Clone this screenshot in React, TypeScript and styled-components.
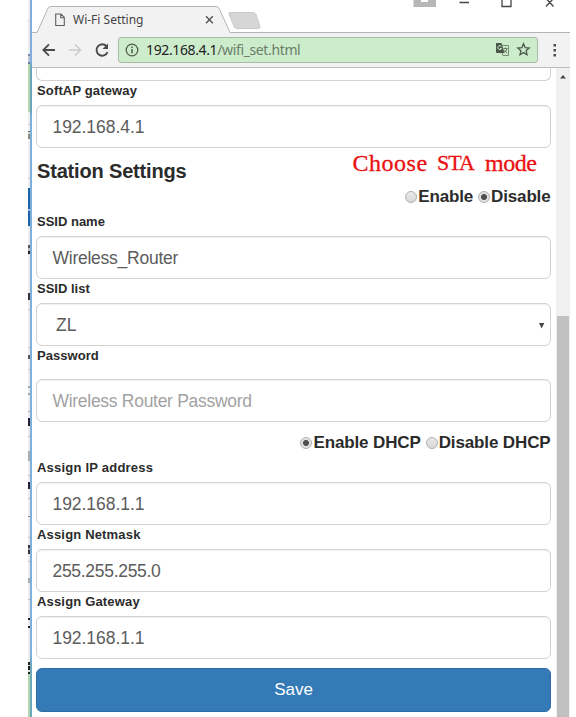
import React from 'react';
import styled, { createGlobalStyle } from 'styled-components';

const GlobalStyle = createGlobalStyle`
  * { box-sizing: border-box; }
  body { margin: 0; background: #fff; overflow: hidden; }
`;

const Screen = styled.main`
  display: flex;
  width: 576px;
  height: 717px;
  padding-left: 28px;
  overflow: hidden;
  background: #fff;
  font-family: 'Liberation Sans', Arial, sans-serif;
`;

const Sliver = styled.div`
  display: flex;
  flex-direction: column;
  width: 2px;
`;

const Segment = styled.div<{ $h: number; $c: string }>`
  flex: 0 0 ${p => p.$h}px;
  background: ${p => p.$c};
`;

const Edge = styled.div`
  width: 2px;
  background: linear-gradient(#82aede 0 60px, #6ba6bd 68px 112px, #7fb0dc 116px 655px, #6ba9bd 665px);
`;

const Browser = styled.div`
  display: flex;
  flex-direction: column;
  width: 538px;
  height: 717px;
`;

const TitleBar = styled.header`
  display: flex;
  position: relative;
  height: 33px;
  flex: none;
`;

const TitleArt = styled.svg`
  position: absolute;
  inset: 0;
`;

const TabTitle = styled.span`
  position: relative;
  margin: 11px 0 0 41px;
  font: 12px/18px 'Noto Sans', 'Open Sans', sans-serif;
  letter-spacing: 0;
  color: #444;
`;

const Toolbar = styled.nav`
  display: flex;
  align-items: center;
  flex: none;
  height: 35px;
  padding-left: 9px;
  background: #f2f2f2;
  border-bottom: 1px solid #b9b9b9;
`;

const AddressBar = styled.div`
  display: flex;
  align-items: center;
  width: 420px;
  height: 26px;
  margin: 0 8px 0 8px;
  padding: 0 6px 1px 6px;
  border: 1px solid #a9bba7;
  border-radius: 3px;
  background: #cdeccb;
`;

const Url = styled.span`
  flex: 1;
  margin-left: 7px;
  font: 14px/22px 'Noto Sans', 'Open Sans', sans-serif;
  letter-spacing: -0.37px;
  color: #6b7d69;
`;

const Host = styled.span`
  color: #222;
`;

const Viewport = styled.div`
  display: flex;
  flex: 1;
  min-height: 0;
`;

const Form = styled.form`
  display: flex;
  flex-direction: column;
  width: 520px;
  margin-right: 4px;
  padding-left: 4px;
`;

const Box = styled.div<{ $muted?: boolean; $indent?: number; $track?: number }>`
  display: flex;
  align-items: center;
  justify-content: space-between;
  flex: none;
  width: 515px;
  height: 43px;
  padding: 1px 5px 0 ${p => p.$indent ?? 15.5}px;
  border: 1px solid #d2d2d2;
  border-radius: 6px;
  box-shadow: inset 0 1px 1px rgba(0, 0, 0, 0.06);
  font-size: 17.5px;
  letter-spacing: ${p => p.$track ?? -0.05}px;
  color: ${p => (p.$muted ? '#a2a2a2' : '#5c5c5c')};
`;

const CutBox = styled.div`
  flex: none;
  width: 515px;
  height: 13px;
  border: 1px solid #d2d2d2;
  border-top: 0;
  border-radius: 0 0 6px 6px;
`;

const Label = styled.label<{ $h?: number; $track?: number }>`
  flex: none;
  height: ${p => p.$h ?? 24}px;
  padding-left: 1px;
  font-size: 13px;
  font-weight: bold;
  line-height: 20px;
  letter-spacing: ${p => p.$track ?? 0}px;
  color: #2b2b2b;
`;

const SectionHead = styled.div`
  display: flex;
  justify-content: space-between;
  flex: none;
  height: 31px;
  padding-right: 15px;
`;

const Heading = styled.h2`
  margin: 10px 0 0 1px;
  font-size: 20px;
  line-height: 26px;
  letter-spacing: -0.17px;
  color: #2b2b2b;
`;

const Note = styled.div`
  display: flex;
  gap: 10px;
  margin-top: 1px;
  font: 24px/28px 'Liberation Serif', serif;
  color: #ea1010;
  -webkit-text-stroke: 0.3px #ea1010;
`;

const NoteWord = styled.span<{ $track: number; $size?: number }>`
  font-size: ${p => p.$size ?? 24}px;
  letter-spacing: ${p => p.$track}px;
  margin-right: ${p => -p.$track}px;
`;

const Radios = styled.div<{ $h: number; $top: number }>`
  display: flex;
  justify-content: flex-end;
  flex: none;
  height: ${p => p.$h}px;
  padding: ${p => p.$top}px 1.5px 0 0;
  gap: 5px;
`;

const RadioLabel = styled.label<{ $track?: number }>`
  display: flex;
  align-items: center;
  height: 20px;
  font-size: 17px;
  font-weight: bold;
  letter-spacing: ${p => p.$track ?? -0.07}px;
  color: #2b2b2b;
`;

const Dot = styled.span<{ $on?: boolean }>`
  width: 12px;
  height: 12px;
  margin: 0 1px 1px 0;
  border: 1px solid #b0b0b0;
  border-radius: 50%;
  background: ${p => (p.$on
    ? 'radial-gradient(circle, #505050 0 2.6px, #e2e2e2 3.4px)'
    : 'linear-gradient(#e9e9e9, #d8d8d8)')};
`;

const Save = styled.button`
  flex: none;
  width: 515px;
  height: 44px;
  margin-top: 9px;
  border: 1px solid #2e6da4;
  border-radius: 6px;
  background: #337ab7;
  color: #fff;
  font: 17px 'Liberation Sans', Arial, sans-serif;
`;

const ScrollTrack = styled.div`
  display: flex;
  flex-direction: column;
  align-items: center;
  justify-content: space-between;
  width: 14px;
  padding-top: 6px;
  background: #f0f0f0;
`;

const Thumb = styled.div`
  width: 12px;
  height: 401px;
  background: #c0c0c0;
`;

const sliver: [number, string][] = [
  [20, '#f0f0f0'], [1, '#cfd3da'], [33, '#e9ebef'], [2, '#7888a8'], [6, '#bcc5d8'], [2, '#637ca8'],
  [48, '#b4d6ac'], [12, '#eceef0'], [1, '#c8ccd2'], [6, '#eceef0'], [1, '#4f6678'], [2, '#dcdcd4'],
  [5, '#8c8c78'], [39, '#eceef0'], [1, '#c8ccd2'], [9, '#eceef0'], [21, '#1c62a6'], [2, '#9dc0dd'],
  [15, '#1c62a6'], [19, '#ececec'], [3, '#555'], [3, '#bbb'], [3, '#222'], [39, '#ececec'],
  [7, '#334'], [9, '#ececec'], [1, '#c8ccd2'], [37, '#ececec'], [1, '#c8ccd2'], [7, '#ececec'],
  [4, '#556'], [10, '#ececec'], [1, '#c8ccd2'], [16, '#ececec'], [2, '#9aa'], [5, '#ececec'], [2, '#9aa'],
  [16, '#ececec'], [1, '#aaa'], [6, '#ececec'], [8, '#223'], [10, '#ececec'], [1, '#bbb'],
  [14, '#ececec'], [10, '#a5aab4'], [14, '#ececec'], [1, '#bbb'], [6, '#ececec'], [7, '#223'],
  [9, '#ececec'], [1, '#bbb'], [17, '#ececec'], [1, '#889'], [20, '#ececec'], [1, '#bbb'],
  [7, '#ececec'], [3, '#334'], [2, '#999'], [4, '#334'], [7, '#ececec'], [1, '#bbb'], [16, '#ececec'],
  [5, '#a5aab4'], [16, '#ececec'], [1, '#bbb'], [18, '#ececec'], [2, '#223'], [6, '#ececec'],
  [2, '#223'], [34, '#ececec'], [3, '#222'], [1, '#ddd'], [4, '#222'], [2, '#ddd'], [2, '#222'], [80, '#b4d6ac'],
];

const BackIcon = () => (
  <svg width="16" height="16" viewBox="0 0 16 16" fill="none" stroke="#4b4b4b" strokeWidth="1.8">
    <path d="M14 8H2.5M8 2.3 2.3 8 8 13.7" />
  </svg>
);

const ForwardIcon = styled.svg`
  margin-left: 10px;
`;

const ReloadIcon = styled.svg`
  margin-left: 11px;
`;

const StarIcon = styled.svg`
  margin-left: 6px;
`;

export default function App() {
  return (
    <>
      <GlobalStyle />
      <Screen>
        <Sliver>
          {sliver.map(([h, c], i) => <Segment key={i} $h={h} $c={c} />)}
        </Sliver>
        <Edge />
        <Browser>
          <TitleBar>
            <TitleArt width="538" height="33" viewBox="0 0 538 33" fill="none">
              <path d="M0 32.5H5L16 8.2Q17 6.5 19 6.5H184Q186 6.5 187 8.2L198 32.5H538V33H0z" fill="#f2f2f2" />
              <path d="M0 32.5H5L16 8.2Q17 6.5 19 6.5H184Q186 6.5 187 8.2L198 32.5H538" stroke="#b4b4b4" />
              <path d="M197 14Q196.500 12.500 198 12.500H221Q223 12.500 224 14.500L228 26.500Q228.500 28.500 226 28.500H205Q203 28.500 202 26.500Z" fill="#d6d6d6" stroke="#cacaca" />
              <path d="M23.700 14H29L32.300 17.300V25.500H23.700ZM28.700 14V17.700H32" stroke="#606060" strokeWidth="1.100" />
              <path d="M174 16.300L180.800 23.300M180.800 16.300L174 23.300" stroke="#555" strokeWidth="1.400" />
              <path d="M381.500 0H404V7H381.500Z" fill="#b7b7b7" />
              <path d="M389 1H396" stroke="#fff" strokeWidth="2" />
              <path d="M427.500 2.500H437M470 0V6.500H479V0M514 6.500L521.500-1.500M521.500 6.500L514-1.500" stroke="#444" strokeWidth="1.300" />
            </TitleArt>
            <TabTitle>Wi-Fi Setting</TabTitle>
          </TitleBar>
          <Toolbar>
            <BackIcon />
            <ForwardIcon width="16" height="16" viewBox="0 0 16 16" fill="none" stroke="#ccc" strokeWidth="1.7">
              <path d="M2 8H13.500M8 2.500L13.500 8L8 13.500" />
            </ForwardIcon>
            <ReloadIcon width="16" height="16" viewBox="0 0 16 16" fill="none" stroke="#4b4b4b" strokeWidth="1.9">
              <path d="M13.500 10.200A5.700 5.700 0 1 1 12.500 4.200" />
              <path d="M14 1.500V7H8.500Z" fill="#4b4b4b" stroke="none" />
            </ReloadIcon>
            <AddressBar>
              <svg width="14" height="14" viewBox="0 0 14 14" fill="none" stroke="#50604e" strokeWidth="1.300">
                <circle cx="7" cy="7" r="5.800" />
                <path d="M7 6V10.300M7 3.500V5" strokeWidth="1.600" />
              </svg>
              <Url><Host>192.168.4.1</Host>/wifi_set.html</Url>
              <svg width="15" height="15" viewBox="0 0 15 15" fill="none">
                <path d="M6.500 3.500H13.500V13.500H8L6.500 10" stroke="#788b76" />
                <path d="M1 1H6.500L9.500 11H2Q1 11 1 10Z" fill="#4b574a" />
                <path d="M6.500 4.500A2 2 0 1 0 6.700 6.500H5" stroke="#cdeccb" />
                <path d="M8.500 6.500H12.500M10.500 5.500V6.500M12 6.500Q11 9.500 9 10.500M9.500 8L12 11" stroke="#65765f" />
              </svg>
              <StarIcon width="15" height="15" viewBox="0 0 15 15" fill="none" stroke="#4d594b" strokeWidth="1.300">
                <path d="M7.500 1.800L9.100 5.600L13.200 6L10.100 8.700L11 12.700L7.500 10.600L4 12.700L4.900 8.700L1.800 6L5.900 5.600Z" />
              </StarIcon>
            </AddressBar>
            <svg width="18" height="16" viewBox="0 0 18 16" fill="#4b4b4b">
              <path d="M7.500 2h2.500v2.500h-2.500zM7.500 7h2.500v2.500h-2.500zM7.500 12h2.500v2.500h-2.500z" />
            </svg>
          </Toolbar>
          <Viewport>
            <Form>
              <CutBox />
              <Label $track={0.15}>SoftAP gateway</Label>
              <Box>192.168.4.1</Box>
              <SectionHead>
                <Heading>Station Settings</Heading>
                <Note>
                  <NoteWord $track={0.5}>Choose</NoteWord>
                  <NoteWord $track={-1} $size={22}>STA</NoteWord>
                  <NoteWord $track={-0.4}>mode</NoteWord>
                </Note>
              </SectionHead>
              <Radios $h={33} $top={8}>
                <RadioLabel $track={-0.15}><Dot />Enable</RadioLabel>
                <RadioLabel $track={-0.15}><Dot $on />Disable</RadioLabel>
              </Radios>
              <Label>SSID name</Label>
              <Box $track={-0.25}>Wireless_Router</Box>
              <Label>SSID list</Label>
              <Box $indent={19}>
                ZL
                <svg width="7" height="7" viewBox="0 0 7 7"><path d="M1 1H6.300L3.600 6.500Z" fill="#444" /></svg>
              </Box>
              <Label $h={33} $track={0.05}>Password</Label>
              <Box $muted $track={-0.29}>Wireless Router Password</Box>
              <Radios $h={36} $top={11}>
                <RadioLabel $track={-0.13}><Dot $on />Enable DHCP</RadioLabel>
                <RadioLabel $track={-0.13}><Dot />Disable DHCP</RadioLabel>
              </Radios>
              <Label $track={0.22}>Assign IP address</Label>
              <Box>192.168.1.1</Box>
              <Label $track={0.17}>Assign Netmask</Label>
              <Box $track={-0.3}>255.255.255.0</Box>
              <Label $track={0.17}>Assign Gateway</Label>
              <Box>192.168.1.1</Box>
              <Save type="button">Save</Save>
            </Form>
            <ScrollTrack>
              <svg width="8" height="5" viewBox="0 0 8 5"><path d="M1 4.500L4 1L7 4.500Z" fill="#444" /></svg>
              <Thumb />
            </ScrollTrack>
          </Viewport>
        </Browser>
      </Screen>
    </>
  );
}
